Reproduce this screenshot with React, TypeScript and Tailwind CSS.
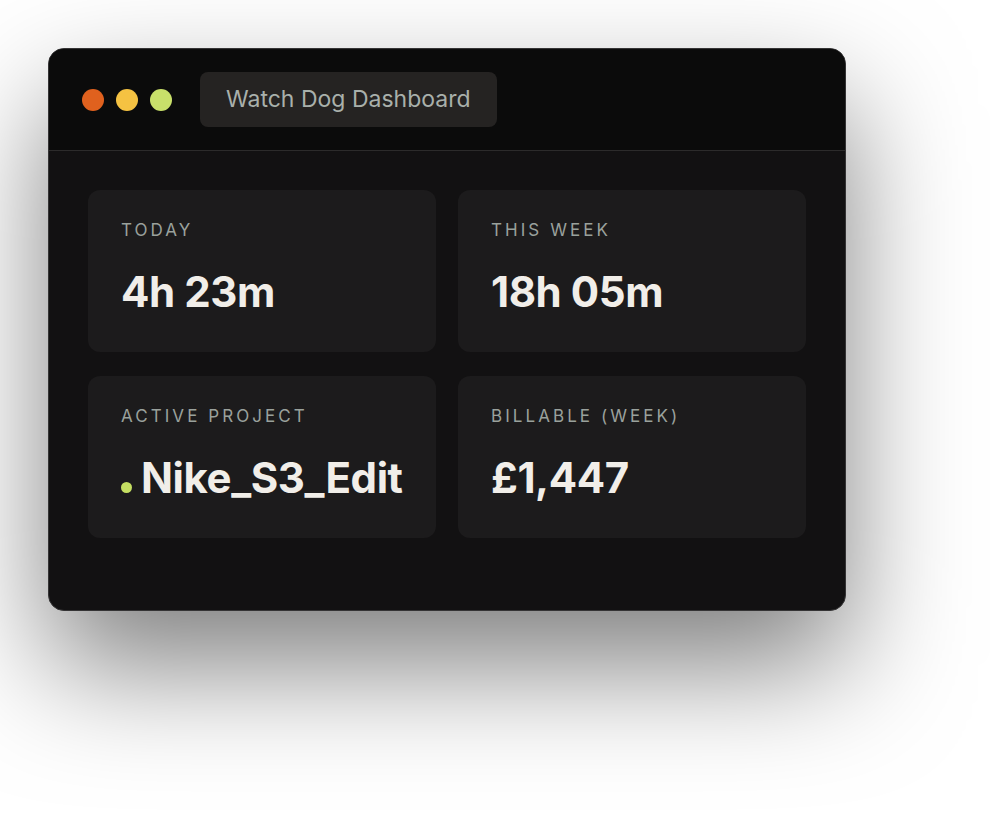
import React from "react";

const cards = [
  { label: "Today", value: "4h 23m" },
  { label: "This Week", value: "18h 05m" },
  { label: "Active Project", value: "Nike_S3_Edit", dot: true },
  { label: "Billable (Week)", value: "£1,447" },
];

export default function App() {
  return (
    <div
      className="min-h-[827px] w-full bg-white pl-12 pt-12"
      style={{ fontFamily: "Inter, 'Noto Sans', sans-serif" }}
    >
      <div className="flex h-[563px] w-[798px] flex-col overflow-hidden rounded-[16px] border border-[#353435] bg-[#121112] shadow-[0_55px_120px_rgba(0,0,0,0.5)]">
        <div className="flex h-[102px] shrink-0 items-center border-b border-[#2c2b2b] bg-[#0b0b0b] pl-[33px]">
          <div className="flex gap-3">
            <span className="h-[22px] w-[22px] rounded-full bg-[#e0611e]" />
            <span className="h-[22px] w-[22px] rounded-full bg-[#f5c242]" />
            <span className="h-[22px] w-[22px] rounded-full bg-[#c9e06a]" />
          </div>
          <div className="ml-[28px] flex h-[55px] items-center rounded-[8px] bg-[#252322] px-[26px] text-[23px] text-[#a9b0ab]">
            Watch Dog Dashboard
          </div>
        </div>
        <div className="grid grid-cols-2 gap-x-[22px] gap-y-[24px] px-[39px] pt-[39px]">
          {cards.map((c) => (
            <div
              key={c.label}
              className="h-[162px] rounded-[12px] bg-[#1c1b1c] pl-[33px] pt-[32px]"
            >
              <div className="text-[17px] uppercase leading-none tracking-[0.18em] text-[#9aa19c]">
                {c.label}
              </div>
              <div className="mt-[32px] flex items-baseline gap-[9px] text-[42px] font-bold leading-none tracking-[-0.01em] text-[#f1eee9]">
                {c.dot && (
                  <span className="inline-block h-[11px] w-[11px] shrink-0 rounded-full bg-[#c5df62]" />
                )}
                <span>{c.value}</span>
              </div>
            </div>
          ))}
        </div>
      </div>
    </div>
  );
}
